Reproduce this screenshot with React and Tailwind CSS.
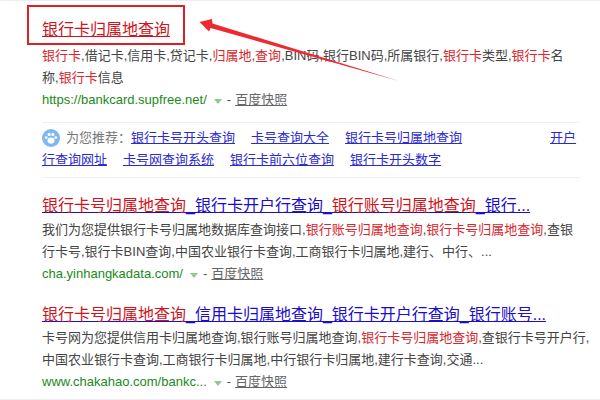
const Em = ({ children }) => <span className="text-[#d9252c]">{children}</span>;

const Caret = () => (
  <svg width="8" height="5" viewBox="0 0 8 5" className="ml-[7px] mr-[5px] mt-[3px]">
    <path d="M0 0h8L4 5z" fill="#8fc98f" />
  </svg>
);

function UrlRow({ url }) {
  return (
    <div className="flex items-center h-[22px] text-[13px] text-[#555]">
      <span className="text-[#1a8a1a]">{url}</span>
      <Caret />
      <span>-</span>
      <span className="ml-[4px] text-[#666] underline">百度快照</span>
    </div>
  );
}

function Title({ children }) {
  return <div className="h-[24px] leading-[24px] text-[16px] whitespace-nowrap text-[#1a0dcc] underline">{children}</div>;
}

function Line({ children }) {
  return <div className="h-[22px] leading-[22px] text-[13px] text-[#444] whitespace-nowrap">{children}</div>;
}

const Link = ({ children }) => <span className="text-[#2a2ad0] underline">{children}</span>;

export default function App() {
  return (
    <div className="relative w-[600px] h-[400px] overflow-hidden bg-white font-['Liberation_Sans','Noto_Sans_CJK_SC',sans-serif] border-y border-[#eeeeee]">
      <div className="pl-[42px] pt-[17px]">
        <div className="h-[24px] leading-[24px] text-[16px] text-[#d0141c] underline">银行卡归属地查询</div>
        <div className="mt-[3px]">
          <Line><Em>银行卡</Em>,借记卡,信用卡,贷记卡,<Em>归属地</Em>,<Em>查询</Em>,BIN码,银行BIN码,所属银行,<Em>银行卡</Em>类型,<Em>银行卡</Em>名</Line>
          <Line>称,<Em>银行卡</Em>信息</Line>
          <UrlRow url="https://bankcard.supfree.net/" />
        </div>

        <div className="w-[538px] mt-[11px] border-y border-[#f0f0f0] h-[56px] pt-[4px]">
          <div className="flex items-center h-[22px] text-[13px] whitespace-nowrap">
            <div className="w-[18px] h-[18px] rounded-full bg-[#7db8f0] flex items-center justify-center mr-[6px]">
              <svg width="14" height="14" viewBox="0 0 12 12" fill="#fff">
                <ellipse cx="6" cy="8.2" rx="3" ry="2.7" />
                <circle cx="1.9" cy="5.6" r="1.2" />
                <circle cx="4.4" cy="2.900" r="1.3" />
                <circle cx="7.6" cy="2.900" r="1.3" />
                <circle cx="10.100" cy="5.6" r="1.2" />
              </svg>
            </div>
            <span className="text-[#777]">为您推荐：</span>
            <Link>银行卡号开头查询</Link>
            <span className="ml-[16px]"><Link>卡号查询大全</Link></span>
            <span className="ml-[16px]"><Link>银行卡号归属地查询</Link></span>
            <span className="ml-[88px]"><Link>开户</Link></span>
          </div>
          <div className="flex gap-[16px] h-[22px] leading-[22px] text-[13px] whitespace-nowrap">
            <Link>行查询网址</Link>
            <Link>卡号网查询系统</Link>
            <Link>银行卡前六位查询</Link>
            <Link>银行卡开头数字</Link>
          </div>
        </div>

        <div className="mt-[16px]">
          <Title><span className="text-[#d0141c]">银行卡号归属地查询</span>_银行卡开户行查询_<span className="text-[#d0141c]">银行账号归属地查询</span>_银行...</Title>
          <div className="mt-[1px]">
            <Line>我们为您提供银行卡号归属地数据库查询接口,<Em>银行账号归属地查询</Em>,<Em>银行卡号归属地查询</Em>,查银</Line>
            <Line>行卡号,银行卡BIN查询,中国农业银行卡查询,工商银行卡归属地,建行、中行、...</Line>
            <UrlRow url="cha.yinhangkadata.com/" />
          </div>
        </div>

        <div className="mt-[18px]">
          <Title><span className="text-[#d0141c]">银行卡号归属地查询</span>_信用卡归属地查询_银行卡开户行查询_银行账号...</Title>
          <div>
            <Line>卡号网为您提供信用卡归属地查询,银行账号归属地查询,<Em>银行卡号归属地查询</Em>,查银行卡号开户行,</Line>
            <Line>中国农业银行卡查询,工商银行卡归属地,中行银行卡归属地,建行卡查询,交通...</Line>
            <UrlRow url="www.chakahao.com/bankc..." />
          </div>
        </div>
      </div>

      {/* annotation */}
      <div className="absolute left-[27px] top-[4px] w-[158px] h-[40px] border-2 border-[#dc2026]" />
      <svg className="absolute left-0 top-0" width="600" height="400" viewBox="0 0 600 400">
        <path d="M199.500 21L212 18L212.500 22.500L399 80L210.500 27L209 30.500Z" fill="#ee2a30" />
      </svg>
    </div>
  );
}
